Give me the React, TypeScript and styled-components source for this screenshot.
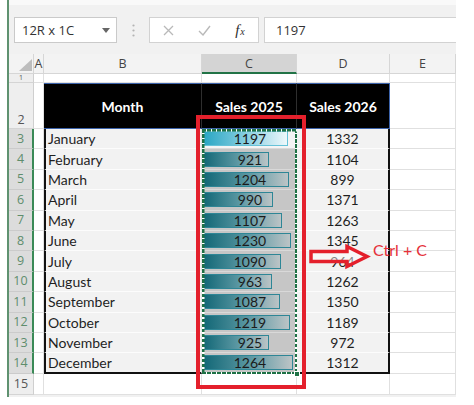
import styled, { createGlobalStyle } from "styled-components";

const months = [
  "January",
  "February",
  "March",
  "April",
  "May",
  "June",
  "July",
  "August",
  "September",
  "October",
  "November",
  "December",
];
const sales2025 = [1197, 921, 1204, 990, 1107, 1230, 1090, 963, 1087, 1219, 925, 1264];
const sales2026 = [1332, 1104, 899, 1371, 1263, 1345, 964, 1262, 1350, 1189, 972, 1312];
const maxSale = Math.max(...sales2025);
const columns = ["A", "B", "C", "D", "E"];

const GlobalStyle = createGlobalStyle`
  html, body { margin: 0; padding: 0; background: #ffffff; }
  body { font-family: "Lato", "Liberation Sans", sans-serif; }
  #root { width: 474px; height: 405px; overflow: hidden; }
`;

const Frame = styled.div`
  margin-left: 7px;
  width: 447px;
  height: 397px;
  border-left: 2px solid #5f9270;
  background: #f1f1f1;
  display: flex;
  flex-direction: column;
`;

const Toolbar = styled.div`
  height: 54px;
  box-sizing: border-box;
  border-top: 5px solid #f9f9f9;
  padding: 12px 0 0 5px;
  display: flex;
  align-items: flex-start;
  font-family: "Open Sans", "Liberation Sans", sans-serif;
  font-size: 13px;
  color: #333;
`;

const NameBox = styled.div`
  width: 103px;
  height: 26px;
  box-sizing: border-box;
  border: 1px solid #cacaca;
  background: #fff;
  display: flex;
  align-items: center;
  justify-content: space-between;
  padding: 0 6px 0 7px;
`;

const Grip = styled.div`
  width: 32px;
  height: 26px;
  display: flex;
  align-items: center;
  justify-content: center;
`;

const ButtonBox = styled.div`
  width: 110px;
  height: 26px;
  box-sizing: border-box;
  border: 1px solid #d2d2d2;
  background: #fff;
  display: flex;
  align-items: center;
`;

const IconSlot = styled.div<{ $muted?: boolean }>`
  width: 36px;
  display: flex;
  align-items: center;
  justify-content: center;
  color: ${(p) => (p.$muted ? "#b9b9b9" : "#444")};
`;

const Fx = styled.span`
  font-family: "Liberation Serif", serif;
  font-style: italic;
  font-size: 15px;
  color: #2e2e2e;
  small {
    font-size: 10px;
    margin-left: 1px;
  }
`;

const FormulaInput = styled.div`
  flex: 1;
  height: 26px;
  margin-left: 5px;
  box-sizing: border-box;
  border: 1px solid #d2d2d2;
  border-right: none;
  background: #fff;
  display: flex;
  align-items: center;
  padding-left: 11px;
`;

const Sheet = styled.div`
  position: relative;
  display: grid;
  grid-template-columns: 25px 10px 158px 95px 93px 66px;
  grid-template-rows: 20px 9px 46px repeat(12, 20.4px) 21px;
  font-size: 14px;
  color: #1f1f1f;
  > div {
    box-sizing: border-box;
  }
`;

const Corner = styled.div`
  background: #f3f3f3;
  border-right: 1px solid #d6d6d6;
  border-bottom: 1px solid #d6d6d6;
  display: flex;
  align-items: flex-end;
  justify-content: flex-end;
  padding: 0 1px 2px 0;
`;

const ColHead = styled.div<{ $active?: boolean }>`
  background: ${(p) => (p.$active ? "#d4d4d4" : "#f3f3f3")};
  border-right: 1px solid #d6d6d6;
  border-bottom: ${(p) => (p.$active ? "2px solid #217346" : "1px solid #d6d6d6")};
  display: flex;
  align-items: center;
  justify-content: center;
  font-family: "Open Sans", "Liberation Sans", sans-serif;
  font-size: 12.5px;
  color: #444;
  overflow: visible;
`;

const RowHead = styled.div<{ $selected?: boolean; $align?: string; $tiny?: boolean }>`
  background: ${(p) => (p.$selected ? "#dcdcdc" : "#eeeeee")};
  color: ${(p) => (p.$selected ? "#5e8d6c" : "#555")};
  border-bottom: 1px solid ${(p) => (p.$selected ? "#cbcbcb" : "#d4d4d4")};
  border-right: ${(p) => (p.$selected ? "2px solid #3b8a57" : "1px solid #cfcfcf")};
  display: flex;
  justify-content: center;
  align-items: ${(p) => p.$align || "center"};
  font-family: "Open Sans", "Liberation Sans", sans-serif;
  font-size: ${(p) => (p.$tiny ? "7px" : "12.5px")};
  line-height: ${(p) => (p.$tiny ? "8px" : "16px")};
  overflow: hidden;
`;

const BlankCell = styled.div`
  background: #fff;
  border-right: 1px solid #e0e0e0;
  border-bottom: 1px solid #e0e0e0;
`;

const HeadCell = styled.div<{ $last?: boolean }>`
  background: #000;
  color: #fff;
  font-weight: 700;
  font-size: 14px;
  display: flex;
  align-items: center;
  justify-content: center;
  border-top: 1px solid #3c63aa;
  border-bottom: 1px solid #3c63aa;
  border-right: 1px solid ${(p) => (p.$last ? "#3c63aa" : "#2e2e2e")};
`;

const BodyCell = styled.div<{
  $align?: string;
  $edgeLeft?: boolean;
  $edgeRight?: boolean;
  $last?: boolean;
}>`
  background: #f2f2f2;
  display: flex;
  align-items: center;
  justify-content: ${(p) => p.$align || "center"};
  padding-left: ${(p) => (p.$align === "flex-start" ? "2px" : "0")};
  border-left: ${(p) => (p.$edgeLeft ? "2px solid #111" : "none")};
  border-right: ${(p) => (p.$edgeRight ? "2px solid #111" : "1px solid #e4e4e4")};
  border-bottom: ${(p) => (p.$last ? "2px solid #111" : "1px solid #fcfcfc")};
`;

const BarCell = styled.div<{ $active?: boolean; $last?: boolean }>`
  display: grid;
  background: ${(p) => (p.$active ? "#f4f4f4" : "#c6c6c6")};
  border-bottom: ${(p) => (p.$last ? "2px solid #111" : "1px solid #d9d9d9")};
  padding-left: 1px;
`;

const Bar = styled.div<{ $active?: boolean }>`
  grid-area: 1 / 1;
  align-self: center;
  justify-self: start;
  height: 15px;
  box-sizing: border-box;
  border: 1px solid ${(p) => (p.$active ? "#66c2d8" : "#2e8696")};
  background: ${(p) =>
    p.$active
      ? "linear-gradient(90deg, #2aa6c4 0%, #8fd2e3 55%, #eef8fb 100%)"
      : "linear-gradient(90deg, #136877 0%, #5f9aa5 55%, #bcc4c6 100%)"};
`;

const BarValue = styled.span`
  grid-area: 1 / 1;
  place-self: center;
  z-index: 1;
  color: #1b1b1b;
`;

const Ants = styled.div`
  position: absolute;
  left: 193px;
  top: 75px;
  width: 95px;
  height: 245px;
  pointer-events: none;
  background:
    repeating-linear-gradient(90deg, #1e7145 0 3.5px, #ffffff 3.5px 5px) top left / 100% 2.5px no-repeat,
    repeating-linear-gradient(90deg, #1e7145 0 3.5px, #ffffff 3.5px 5px) bottom left / 100% 2.5px no-repeat,
    repeating-linear-gradient(180deg, #1e7145 0 3.5px, #ffffff 3.5px 5px) top left / 2.5px 100% no-repeat,
    repeating-linear-gradient(180deg, #1e7145 0 3.5px, #ffffff 3.5px 5px) top right / 2.5px 100% no-repeat;
`;

const FillHandle = styled.div`
  position: absolute;
  right: -3px;
  bottom: -3px;
  width: 6px;
  height: 6px;
  box-sizing: border-box;
  background: #1e7145;
  border: 1px solid #fff;
`;

const RedFrame = styled.div`
  position: absolute;
  left: 187px;
  top: 61px;
  width: 110px;
  height: 274px;
  box-sizing: border-box;
  border: 4px solid #e4202c;
  pointer-events: none;
`;

const Arrow = styled.svg`
  position: absolute;
  left: 299px;
  top: 189px;
`;

const Note = styled.div`
  position: absolute;
  left: 364px;
  top: 186px;
  font-size: 16px;
  line-height: 20px;
  color: #e5303a;
  white-space: nowrap;
`;

export default function App() {
  return (
    <>
      <GlobalStyle />
      <Frame>
        <Toolbar>
          <NameBox>
            <span>12R x 1C</span>
            <svg width="8" height="5" viewBox="0 0 8 5">
              <path d="M0 0 H8 L4 5 Z" fill="#666" />
            </svg>
          </NameBox>
          <Grip>
            <svg width="3" height="13" viewBox="0 0 3 13">
              <circle cx="1.5" cy="1.5" r="1.1" fill="#b3b3b3" />
              <circle cx="1.5" cy="6.5" r="1.1" fill="#b3b3b3" />
              <circle cx="1.5" cy="11.5" r="1.1" fill="#b3b3b3" />
            </svg>
          </Grip>
          <ButtonBox>
            <IconSlot $muted>
              <svg width="11" height="11" viewBox="0 0 11 11">
                <path d="M1 1 L10 10 M10 1 L1 10" stroke="currentColor" strokeWidth="1.3" />
              </svg>
            </IconSlot>
            <IconSlot $muted>
              <svg width="13" height="11" viewBox="0 0 13 11">
                <path d="M1 6 L5 10 L12 1" fill="none" stroke="currentColor" strokeWidth="1.4" />
              </svg>
            </IconSlot>
            <IconSlot>
              <Fx>
                f<small>x</small>
              </Fx>
            </IconSlot>
          </ButtonBox>
          <FormulaInput>1197</FormulaInput>
        </Toolbar>

        <Sheet>
          <Corner>
            <svg width="13" height="12" viewBox="0 0 13 12">
              <path d="M13 0 V12 H0 Z" fill="#bdbdbd" />
            </svg>
          </Corner>
          {columns.map((c) => (
            <ColHead key={c} $active={c === "C"}>
              {c}
            </ColHead>
          ))}

          <RowHead $tiny>1</RowHead>
          {columns.map((c) => (
            <BlankCell key={`r1-${c}`} />
          ))}

          <RowHead $align="flex-end">2</RowHead>
          <BlankCell />
          <HeadCell>Month</HeadCell>
          <HeadCell>Sales 2025</HeadCell>
          <HeadCell $last>Sales 2026</HeadCell>
          <BlankCell />

          {months.map((m, i) => {
            const last = i === months.length - 1;
            const v = sales2025[i];
            return [
              <RowHead key={`h${i}`} $selected>
                {i + 3}
              </RowHead>,
              <BlankCell key={`a${i}`} />,
              <BodyCell key={`b${i}`} $align="flex-start" $edgeLeft $last={last}>
                {m}
              </BodyCell>,
              <BarCell key={`c${i}`} $active={i === 0} $last={last}>
                <Bar $active={i === 0} style={{ width: `${(v / maxSale) * 90}px` }} />
                <BarValue>{v}</BarValue>
              </BarCell>,
              <BodyCell key={`d${i}`} $edgeRight $last={last}>
                {sales2026[i]}
              </BodyCell>,
              <BlankCell key={`e${i}`} />,
            ];
          })}

          <RowHead>15</RowHead>
          {columns.map((c) => (
            <BlankCell key={`r15-${c}`} />
          ))}

          <Ants>
            <FillHandle />
          </Ants>
          <RedFrame />
          <Arrow width="64" height="27" viewBox="0 0 64 27">
            <polygon
              points="3,8.5 39,8.5 39,3.5 59,13.5 39,23.5 39,18.5 3,18.5"
              fill="rgba(255,255,255,0.45)"
              stroke="#e4202c"
              strokeWidth="3.5"
              strokeLinejoin="miter"
            />
          </Arrow>
          <Note>Ctrl + C</Note>
        </Sheet>
      </Frame>
    </>
  );
}
